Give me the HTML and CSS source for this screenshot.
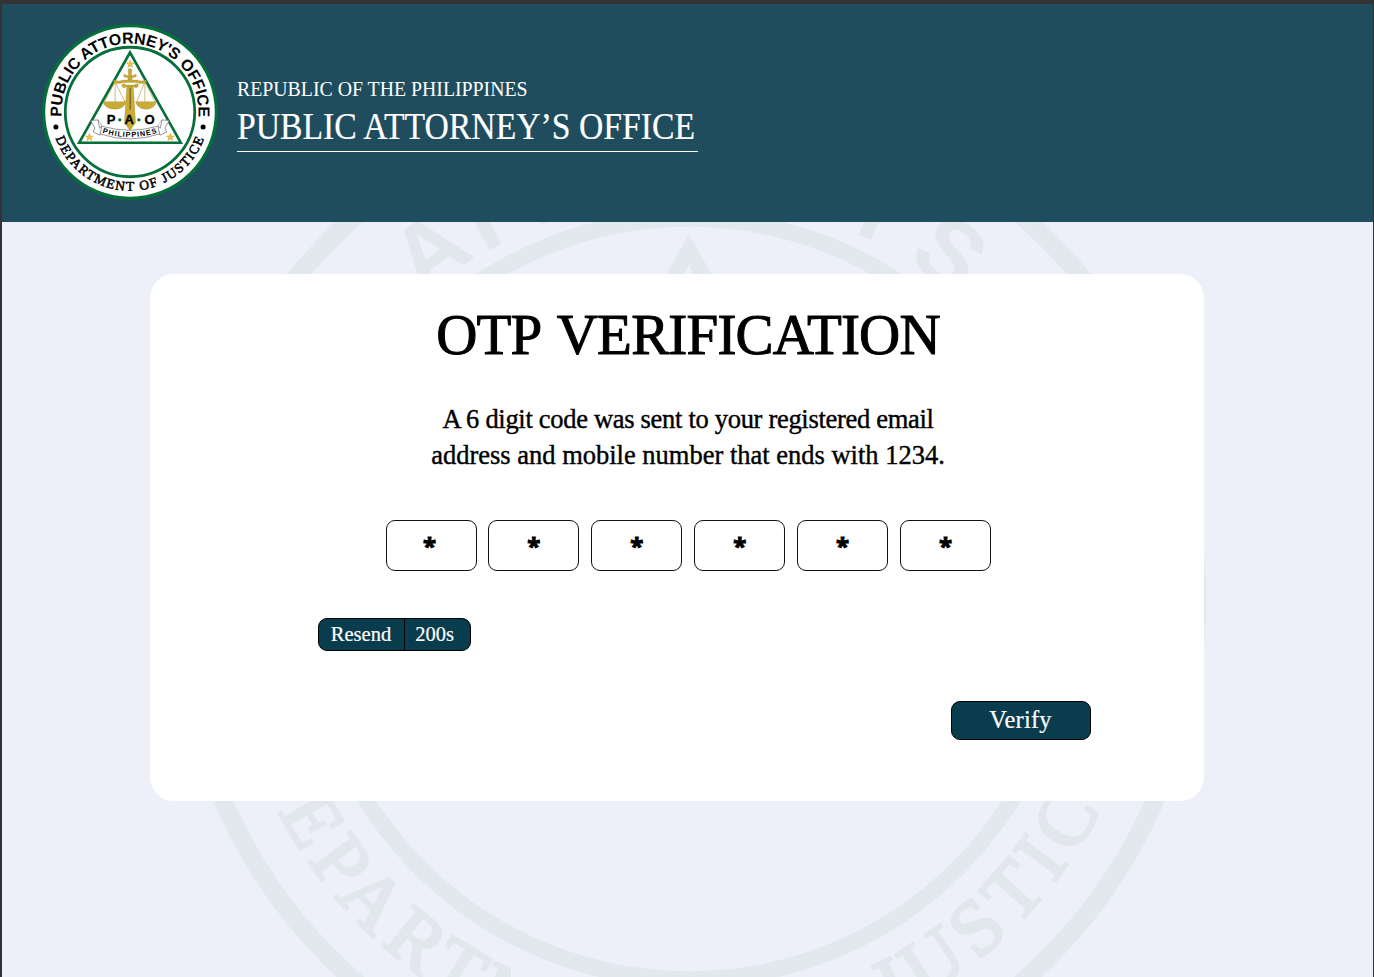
FILE: index.html
```html
<!DOCTYPE html>
<html lang="en">
<head>
<meta charset="utf-8">
<title>OTP Verification</title>
<link rel="stylesheet" href="styles.css">
</head>
<body>
<svg class="defs" width="0" height="0" aria-hidden="true">
  <defs>
    <path id="arc-top" d="M78.500 301.700A204.500 204.500 0 1 1 486.500 301.700"/>
    <path id="arc-bottom" d="M60.600 365.100A235 235 0 0 0 504.400 365.100"/>
    <path id="arc-banner" d="M198 349Q282 376 366 349"/>
    <path id="star" d="M0-12L3-4 11.500-3.700 4.800 1.500 7.200 9.800 0 5-7.200 9.800-4.800 1.500-11.500-3.700-3-4Z"/>
    <symbol id="seal" viewBox="19.500 24.500 526 526">
      <circle class="seal-disc" cx="282.500" cy="287.500" r="258"/>
      <circle class="seal-ring" cx="282.500" cy="287.500" r="258.200" stroke-width="9.600"/>
      <circle class="seal-ring" cx="282.500" cy="287.500" r="193.500" stroke-width="8.300"/>
      <path class="seal-green" fill-rule="evenodd" d="M282.500 101.800L441 383.500H124ZM282.500 117.600L137.100 376H427.900Z"/>
      <text class="seal-name"><textPath href="#arc-top" textLength="672">PUBLIC ATTORNEY<tspan dx="-2">'</tspan><tspan dx="-1">S</tspan><tspan dx="2"> </tspan>OFFICE</textPath></text>
      <text class="seal-dept"><textPath href="#arc-bottom" textLength="577">DEPARTMENT OF JUSTICE</textPath></text>
      <circle class="seal-ink" cx="61" cy="332" r="7.500"/>
      <circle class="seal-ink" cx="501" cy="332" r="7.500"/>
    </symbol>
    <symbol id="emblem" viewBox="19.500 24.500 526 526">
      <g class="star">
        <use href="#star" x="283" y="145"/>
        <use href="#star" x="161" y="363"/>
        <use href="#star" x="403" y="363"/>
      </g>
      <g class="gold-line">
        <path d="M238 197L204 261M238 197L269 261M238 197V261M327 197L301 261M327 197L359 261M327 197V261"/>
      </g>
      <g class="gold">
        <path d="M202 257H271Q265 279 237 279Q208 279 202 257Z"/>
        <path d="M299 257H361Q355 279 330 279Q306 279 299 257Z"/>
        <circle cx="282.500" cy="163" r="5.500"/>
        <path d="M278 168H287L289 195H276Z"/>
        <path d="M263 177Q267 172 271 178Q282 183 294 178Q298 172 302 177Q302 184 295 184Q282 188 270 184Q263 184 263 177Z"/>
        <path d="M234 192Q249 198 262 192H303Q316 198 331 192V199Q316 205 303 199H262Q249 205 234 199Z"/>
        <path d="M259 204Q264 202 270 207H295Q301 202 307 204V211Q301 219 294 212H271Q264 219 259 211Z"/>
        <path d="M273 211H292L299 319 282.500 343 266 319Z"/>
      </g>
      <path class="blade" d="M283 215V280"/>
      <g class="ribbon">
        <path d="M165 313L187 311 201 333 193 357 173 347 177 335ZM400 313L378 311 364 333 372 357 392 347 387 335Z"/>
        <path d="M198 330Q282 354 366 330L371 353Q282 383 193 353Z"/>
        <path d="M187 311L192 336 198 330M378 311L373 336 366 330"/>
      </g>
      <text class="ribbon-text"><textPath href="#arc-banner" startOffset="2" textLength="166">PHILIPPINES</textPath></text>
      <text class="pao" x="213" y="322">P</text>
      <text class="pao" x="266" y="322">A</text>
      <text class="pao" x="326" y="322">O</text>
      <circle class="seal-green" cx="252" cy="311" r="5"/>
      <circle class="seal-green" cx="309" cy="311" r="5"/>
    </symbol>
  </defs>
</svg>

<div class="page">
  <header class="header">
    <svg class="logo" role="img" aria-label="Public Attorney's Office seal"><use href="#seal"/><use href="#emblem"/></svg>
    <div class="brand">
      <div class="brand-country"><span>REPUBLIC OF THE PHILIPPINES</span></div>
      <div class="brand-office"><span>PUBLIC ATTORNEY’S OFFICE</span></div>
    </div>
  </header>
  <main class="main">
    <svg class="watermark" aria-hidden="true"><use href="#seal"/></svg>
    <section class="card">
      <h1 class="title">OTP VERIFICATION</h1>
      <p class="message"><span class="line-a">A 6 digit code was sent to your registered email</span><br><span class="line-b">address and mobile number that ends with 1234.</span></p>
      <div class="code">
        <span class="digit first">*</span><span class="digit">*</span><span class="digit">*</span><span class="digit">*</span><span class="digit">*</span><span class="digit">*</span>
      </div>
      <div class="resend">
        <button class="resend-action">Resend</button>
        <span class="resend-timer">200s</span>
      </div>
      <button class="verify">Verify</button>
    </section>
  </main>
</div>
</body>
</html>
```
FILE: styles.css
```css
* { box-sizing: border-box; }
body {
  margin: 0;
  background: #333;
  font-family: "Liberation Serif", serif;
  overflow: hidden;
}
.defs { position: absolute; }
.page {
  height: 977px;
  padding: 4px 1px 0 2px;
  display: flex;
  flex-direction: column;
}

/* Header */
.header {
  flex: none;
  height: 218px;
  padding: 20px 0 0 40px;
  display: flex;
  align-items: flex-start;
  background: #204d5e;
  color: #fff;
}
.logo {
  flex: none;
  width: 176px;
  height: 176px;
}
.brand {
  width: 461px;
  height: 128px;
  margin-left: 19px;
  padding-top: 52px;
  border-bottom: 1px solid #fff;
  white-space: nowrap;
}
.brand span { display: inline-block; transform-origin: 0 50%; }
.brand-country { font-size: 22px; line-height: 26px; }
.brand-country span { transform: scaleX(.9); }
.brand-office { font-size: 38.500px; line-height: 49px; }
.brand-office span { transform: scaleX(.875); -webkit-text-stroke: .2px #fff; }

/* Seal */
.seal-disc { fill: var(--seal-paper, #fff); }
.seal-ring { fill: none; stroke: var(--seal-green, #056f39); }
.seal-green { fill: var(--seal-green, #056f39); }
.seal-ink { fill: var(--seal-ink, #000); }
.seal-name {
  font: bold 47.500px "Liberation Sans", sans-serif;
  fill: var(--seal-ink, #000);
}
.seal-dept {
  font: 40px "Liberation Serif", serif;
  fill: var(--seal-ink, #000);
  stroke: var(--seal-ink, #000);
  stroke-width: 1.600;
}
.star { fill: #f5c431; stroke: #a8872c; stroke-width: 1; }
.gold { fill: #c9ab35; stroke: #9b8129; stroke-width: 1; }
.gold-line { fill: none; stroke: #b49a37; stroke-width: 2; }
.blade { stroke: #4f4116; stroke-width: 2.500; }
.ribbon { fill: #fff; stroke: #333; stroke-width: 1.500; }
.ribbon-text { font: bold 22px "Liberation Sans", sans-serif; }
.pao { font: bold 39px "Liberation Sans", sans-serif; stroke: #000; stroke-width: 1; }

/* Main area */
.main {
  position: relative;
  flex: 1;
  overflow: hidden;
  padding-top: 52px;
  background: #edf0f8;
}
.watermark {
  --seal-paper: #edf0f8;
  --seal-green: #e2e9ee;
  --seal-ink: #e2e6ed;
  position: absolute;
  left: 169.500px;
  top: -140px;
  width: 1034px;
  height: 1034px;
}
.card {
  position: relative;
  width: 1054px;
  height: 526.500px;
  margin-left: 147.500px;
  padding: 28px 113px 0 168px;
  border-radius: 24px;
  background: #fff;
  display: flex;
  flex-direction: column;
}
.title {
  margin: 0 32px 0 0;
  font-size: 57px;
  font-weight: 400;
  line-height: 66px;
  letter-spacing: -.8px;
  word-spacing: 5px;
  text-align: center;
  white-space: nowrap;
  -webkit-text-stroke: 1px #000;
  align-self: center;
}
.message {
  margin: 33px 32px 0 0;
  font-size: 26.500px;
  line-height: 36px;
  text-align: center;
  white-space: nowrap;
  align-self: center;
  -webkit-text-stroke: .4px #000;
}
.line-a { letter-spacing: -.3px; }
.code {
  margin: 47px 0 0 68px;
  display: flex;
  gap: 11.900px;
}
.digit {
  width: 91px;
  height: 51px;
  border: 1px solid #111;
  border-radius: 9px;
  padding-top: 7px;
  font: bold 24px/36px "Open Sans", sans-serif;
  text-align: center;
  -webkit-text-stroke: 1px #000;
}
.first { padding-right: 3px; }
.resend {
  width: 153px;
  height: 33px;
  margin-top: 47px;
  display: flex;
  align-items: stretch;
  border: 1px solid #000;
  border-radius: 9px;
  background: #093c4c;
  color: #fff;
  font-size: 20.500px;
  line-height: 31px;
  text-align: center;
  -webkit-text-stroke: .2px #fff;
}
.resend-action {
  width: 86px;
  border: 0;
  border-right: 1px solid #000;
  padding: 0;
  background: none;
  color: inherit;
  font: inherit;
}
.resend-timer { flex: 1; padding-right: 5px; }
.verify {
  align-self: flex-end;
  width: 140px;
  height: 39px;
  margin-top: 50px;
  padding: 0 0 2px;
  border: 1px solid #000;
  border-radius: 9px;
  background: #093c4c;
  color: #fff;
  font: 24.500px/34px "Liberation Serif", serif;
  letter-spacing: .2px;
  -webkit-text-stroke: .2px #fff;
}
```
